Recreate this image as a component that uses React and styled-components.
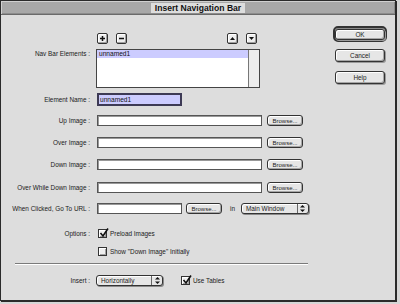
import React from "react";
import styled, { createGlobalStyle } from "styled-components";

const Global = createGlobalStyle`
  html, body { margin: 0; padding: 0; background: #d6d6d6; }
  body { width: 400px; height: 304px; overflow: hidden; font-family: "Liberation Sans", Arial, sans-serif; }
`;

const Window = styled.div`
  width: 396px;
  height: 301px;
  background: #dddddd;
  border: 1px solid #2a2a2a;
  box-shadow: 1px 1px 0 #2a2a2a;
  display: flex;
  flex-direction: column;
  box-sizing: border-box;
`;

const TitleBar = styled.div`
  height: 13px;
  background: #a8a8a8;
  border-bottom: 1px solid #6a6a6a;
  box-shadow: inset 1px 1px 0 #d0d0d0, inset -1px -1px 0 #8c8c8c;
  display: flex;
  align-items: center;
  justify-content: center;
  flex-shrink: 0;
`;

const Title = styled.div`
  background: #dddddd;
  padding: 0 4px;
  height: 10px;
  line-height: 10px;
  font-size: 8.6px;
  font-weight: bold;
  color: #111;
`;

const Body = styled.div`
  flex: 1;
  display: flex;
  padding: 0 8px 0 8px;
`;

const Form = styled.div`
  flex: 1;
  display: flex;
  flex-direction: column;
`;

const Row = styled.div`
  display: flex;
  align-items: ${(p) => (p.$top ? "flex-start" : "center")};
  margin-top: ${(p) => p.$mt}px;
  height: ${(p) => p.$h}px;
`;

const Label = styled.div`
  width: 81px;
  flex-shrink: 0;
  text-align: right;
  font-size: 6.4px;
  color: #1a1a1a;
  padding-right: 6px;
  padding-top: ${(p) => p.$pt || 0}px;
  white-space: nowrap;
`;

const Text = styled.span`
  font-size: 6.4px;
  color: #1a1a1a;
  white-space: nowrap;
  margin-left: ${(p) => p.$ml || 0}px;
`;

const Toolbar = styled.div`
  width: 164px;
  display: flex;
  justify-content: space-between;
  padding: 0 3px 0 1px;
  box-sizing: border-box;
`;

const Group = styled.div`
  display: flex;
  gap: 8px;
`;

const SmallButton = styled.div`
  width: 11px;
  height: 11px;
  box-sizing: border-box;
  border: 1px solid #333;
  border-radius: 2px;
  background: #eeeeee;
  box-shadow: inset -1px -1px 0 #a0a0a0, inset 1px 1px 0 #ffffff;
  display: flex;
  align-items: center;
  justify-content: center;
`;

const ListBox = styled.div`
  width: 164px;
  height: 39px;
  box-sizing: border-box;
  border: 1px solid #444;
  background: #fff;
  display: flex;
`;

const ListItems = styled.div`
  flex: 1;
`;

const ListItem = styled.div`
  height: 8px;
  line-height: 8px;
  font-size: 6.6px;
  padding-left: 2px;
  color: #111;
  background: ${(p) => (p.$selected ? "#ccccff" : "transparent")};
`;

const ScrollTrack = styled.div`
  width: 10px;
  background: #ececec;
  border-left: 1px solid #777;
`;

const Input = styled.div`
  width: ${(p) => p.$w}px;
  height: ${(p) => p.$h || 11}px;
  box-sizing: border-box;
  margin-left: 1px;
  border: 1px solid #555;
  box-shadow: inset 1px 1px 0 #999;
  background: #fff;
  font-size: 6.6px;
  line-height: 9px;
  padding-left: 2px;
  color: #111;
`;

const FocusInput = styled(Input)`
  background: #ccccff;
  border: 2px solid #3d3a55;
  box-shadow: none;
  line-height: 9px;
  padding-left: 1px;
`;

const PushButton = styled.div`
  width: ${(p) => p.$w}px;
  height: 11px;
  box-sizing: border-box;
  margin-left: ${(p) => p.$ml || 0}px;
  border: 1px solid #333;
  border-radius: 3px;
  background: #e6e6e6;
  box-shadow: inset -1px -1px 0 #a6a6a6, inset 1px 1px 0 #fff;
  font-size: 6px;
  color: #222;
  display: flex;
  align-items: center;
  justify-content: center;
`;

const Popup = styled.div`
  width: ${(p) => p.$w}px;
  height: 11px;
  box-sizing: border-box;
  margin-left: ${(p) => p.$ml || 0}px;
  border: 1px solid #333;
  border-radius: 3px;
  background: #e6e6e6;
  box-shadow: 1px 1px 0 #8a8a8a, inset 1px 1px 0 #fff;
  display: flex;
  align-items: center;
  font-size: 6.4px;
  color: #222;
`;

const PopupText = styled.div`
  flex: 1;
  padding-left: 4px;
`;

const PopupArrows = styled.div`
  width: 10px;
  height: 100%;
  border-left: 1px solid #666;
  display: flex;
  align-items: center;
  justify-content: center;
`;

const Check = styled.div`
  width: 9px;
  height: 9px;
  box-sizing: border-box;
  margin-left: ${(p) => p.$ml || 0}px;
  border: 1px solid #333;
  background: #eeeeee;
  box-shadow: inset 1px 1px 0 #fff, inset -1px -1px 0 #a0a0a0;
  position: relative;
  flex-shrink: 0;
`;

const CheckMark = styled.svg`
  position: absolute;
  left: 0px;
  top: -2px;
`;

const Separator = styled.div`
  margin-top: ${(p) => p.$mt}px;
  margin-left: 6px;
  width: 293px;
  height: 1px;
  background: #7a7a7a;
  border-bottom: 1px solid #fff;
`;

const ButtonColumn = styled.div`
  width: 54px;
  display: flex;
  flex-direction: column;
  align-items: center;
  padding-top: 11px;
`;

const DefaultRing = styled.div`
  width: 54px;
  height: 16px;
  box-sizing: border-box;
  border: 2px solid #333;
  border-radius: 5px;
  background: #bdbdbd;
  box-shadow: inset 1px 1px 0 #888;
  display: flex;
  align-items: center;
  justify-content: center;
`;

const DialogButton = styled.div`
  width: 50px;
  height: ${(p) => p.$h || 13}px;
  margin-top: ${(p) => p.$mt || 0}px;
  box-sizing: border-box;
  border: 1px solid #333;
  border-radius: 3px;
  background: #e6e6e6;
  box-shadow: inset -1px -1px 0 #a6a6a6, inset 1px 1px 0 #fff, 1px 1px 0 #9a9a9a;
  font-size: 6.4px;
  color: #222;
  display: flex;
  align-items: center;
  justify-content: center;
`;

const PlusIcon = () => (
  <svg width="5" height="5" viewBox="0 0 5 5">
    <rect x="0" y="1.75" width="5" height="1.5" fill="#111" />
    <rect x="1.75" y="0" width="1.5" height="5" fill="#111" />
  </svg>
);
const MinusIcon = () => (
  <svg width="5" height="5" viewBox="0 0 5 5">
    <rect x="0" y="1.75" width="5" height="1.5" fill="#111" />
  </svg>
);
const UpIcon = () => (
  <svg width="5" height="3" viewBox="0 0 5 3">
    <polygon points="2.5,0 5,3 0,3" fill="#111" />
  </svg>
);
const DownIcon = () => (
  <svg width="5" height="3" viewBox="0 0 5 3">
    <polygon points="0,0 5,0 2.5,3" fill="#111" />
  </svg>
);
const UpDown = () => (
  <svg width="5" height="7" viewBox="0 0 5 7">
    <polygon points="2.5,0 5,2.5 0,2.5" fill="#111" />
    <polygon points="0,4.5 5,4.5 2.5,7" fill="#111" />
  </svg>
);
const Tick = () => (
  <CheckMark width="10" height="10" viewBox="0 0 10 10">
    <polyline points="1.5,5 4,8 9,0.5" fill="none" stroke="#111" strokeWidth="1.6" />
  </CheckMark>
);

const imageRows = [
  { label: "Up Image :", mt: 9 },
  { label: "Over Image :", mt: 11 },
  { label: "Down Image :", mt: 11 },
  { label: "Over While Down Image :", mt: 12 },
];

export default function App() {
  return (
    <>
      <Global />
      <Window>
        <TitleBar>
          <Title>Insert Navigation Bar</Title>
        </TitleBar>
        <Body>
          <Form>
            <Row $mt={18} $h={11}>
              <Label />
              <Toolbar>
                <Group>
                  <SmallButton><PlusIcon /></SmallButton>
                  <SmallButton><MinusIcon /></SmallButton>
                </Group>
                <Group>
                  <SmallButton><UpIcon /></SmallButton>
                  <SmallButton><DownIcon /></SmallButton>
                </Group>
              </Toolbar>
            </Row>
            <Row $mt={5} $h={39} $top>
              <Label $pt={1}>Nav Bar Elements :</Label>
              <ListBox>
                <ListItems>
                  <ListItem $selected>unnamed1</ListItem>
                </ListItems>
                <ScrollTrack />
              </ListBox>
            </Row>
            <Row $mt={5} $h={13}>
              <Label>Element Name :</Label>
              <FocusInput $w={85} $h={13}>unnamed1</FocusInput>
            </Row>
            {imageRows.map((r) => (
              <Row key={r.label} $mt={r.mt} $h={11}>
                <Label>{r.label}</Label>
                <Input $w={165} />
                <PushButton $w={36} $ml={5}>Browse...</PushButton>
              </Row>
            ))}
            <Row $mt={10} $h={11}>
              <Label>When Clicked, Go To URL :</Label>
              <Input $w={85} />
              <PushButton $w={36} $ml={4}>Browse...</PushButton>
              <Text $ml={8}>in</Text>
              <Popup $w={68} $ml={6}>
                <PopupText>Main Window</PopupText>
                <PopupArrows><UpDown /></PopupArrows>
              </Popup>
            </Row>
            <Row $mt={15} $h={9}>
              <Label>Options :</Label>
              <Check $ml={2}><Tick /></Check>
              <Text $ml={3}>Preload Images</Text>
            </Row>
            <Row $mt={9} $h={9}>
              <Label />
              <Check $ml={2} />
              <Text $ml={3}>Show "Down Image" Initially</Text>
            </Row>
            <Separator $mt={7} />
            <Row $mt={10} $h={11}>
              <Label>Insert :</Label>
              <Popup $w={67}>
                <PopupText>Horizontally</PopupText>
                <PopupArrows><UpDown /></PopupArrows>
              </Popup>
              <Check $ml={18}><Tick /></Check>
              <Text $ml={3}>Use Tables</Text>
            </Row>
          </Form>
          <ButtonColumn>
            <DefaultRing>
              <DialogButton $h={11}>OK</DialogButton>
            </DefaultRing>
            <DialogButton $mt={7}>Cancel</DialogButton>
            <DialogButton $mt={9}>Help</DialogButton>
          </ButtonColumn>
        </Body>
      </Window>
    </>
  );
}
